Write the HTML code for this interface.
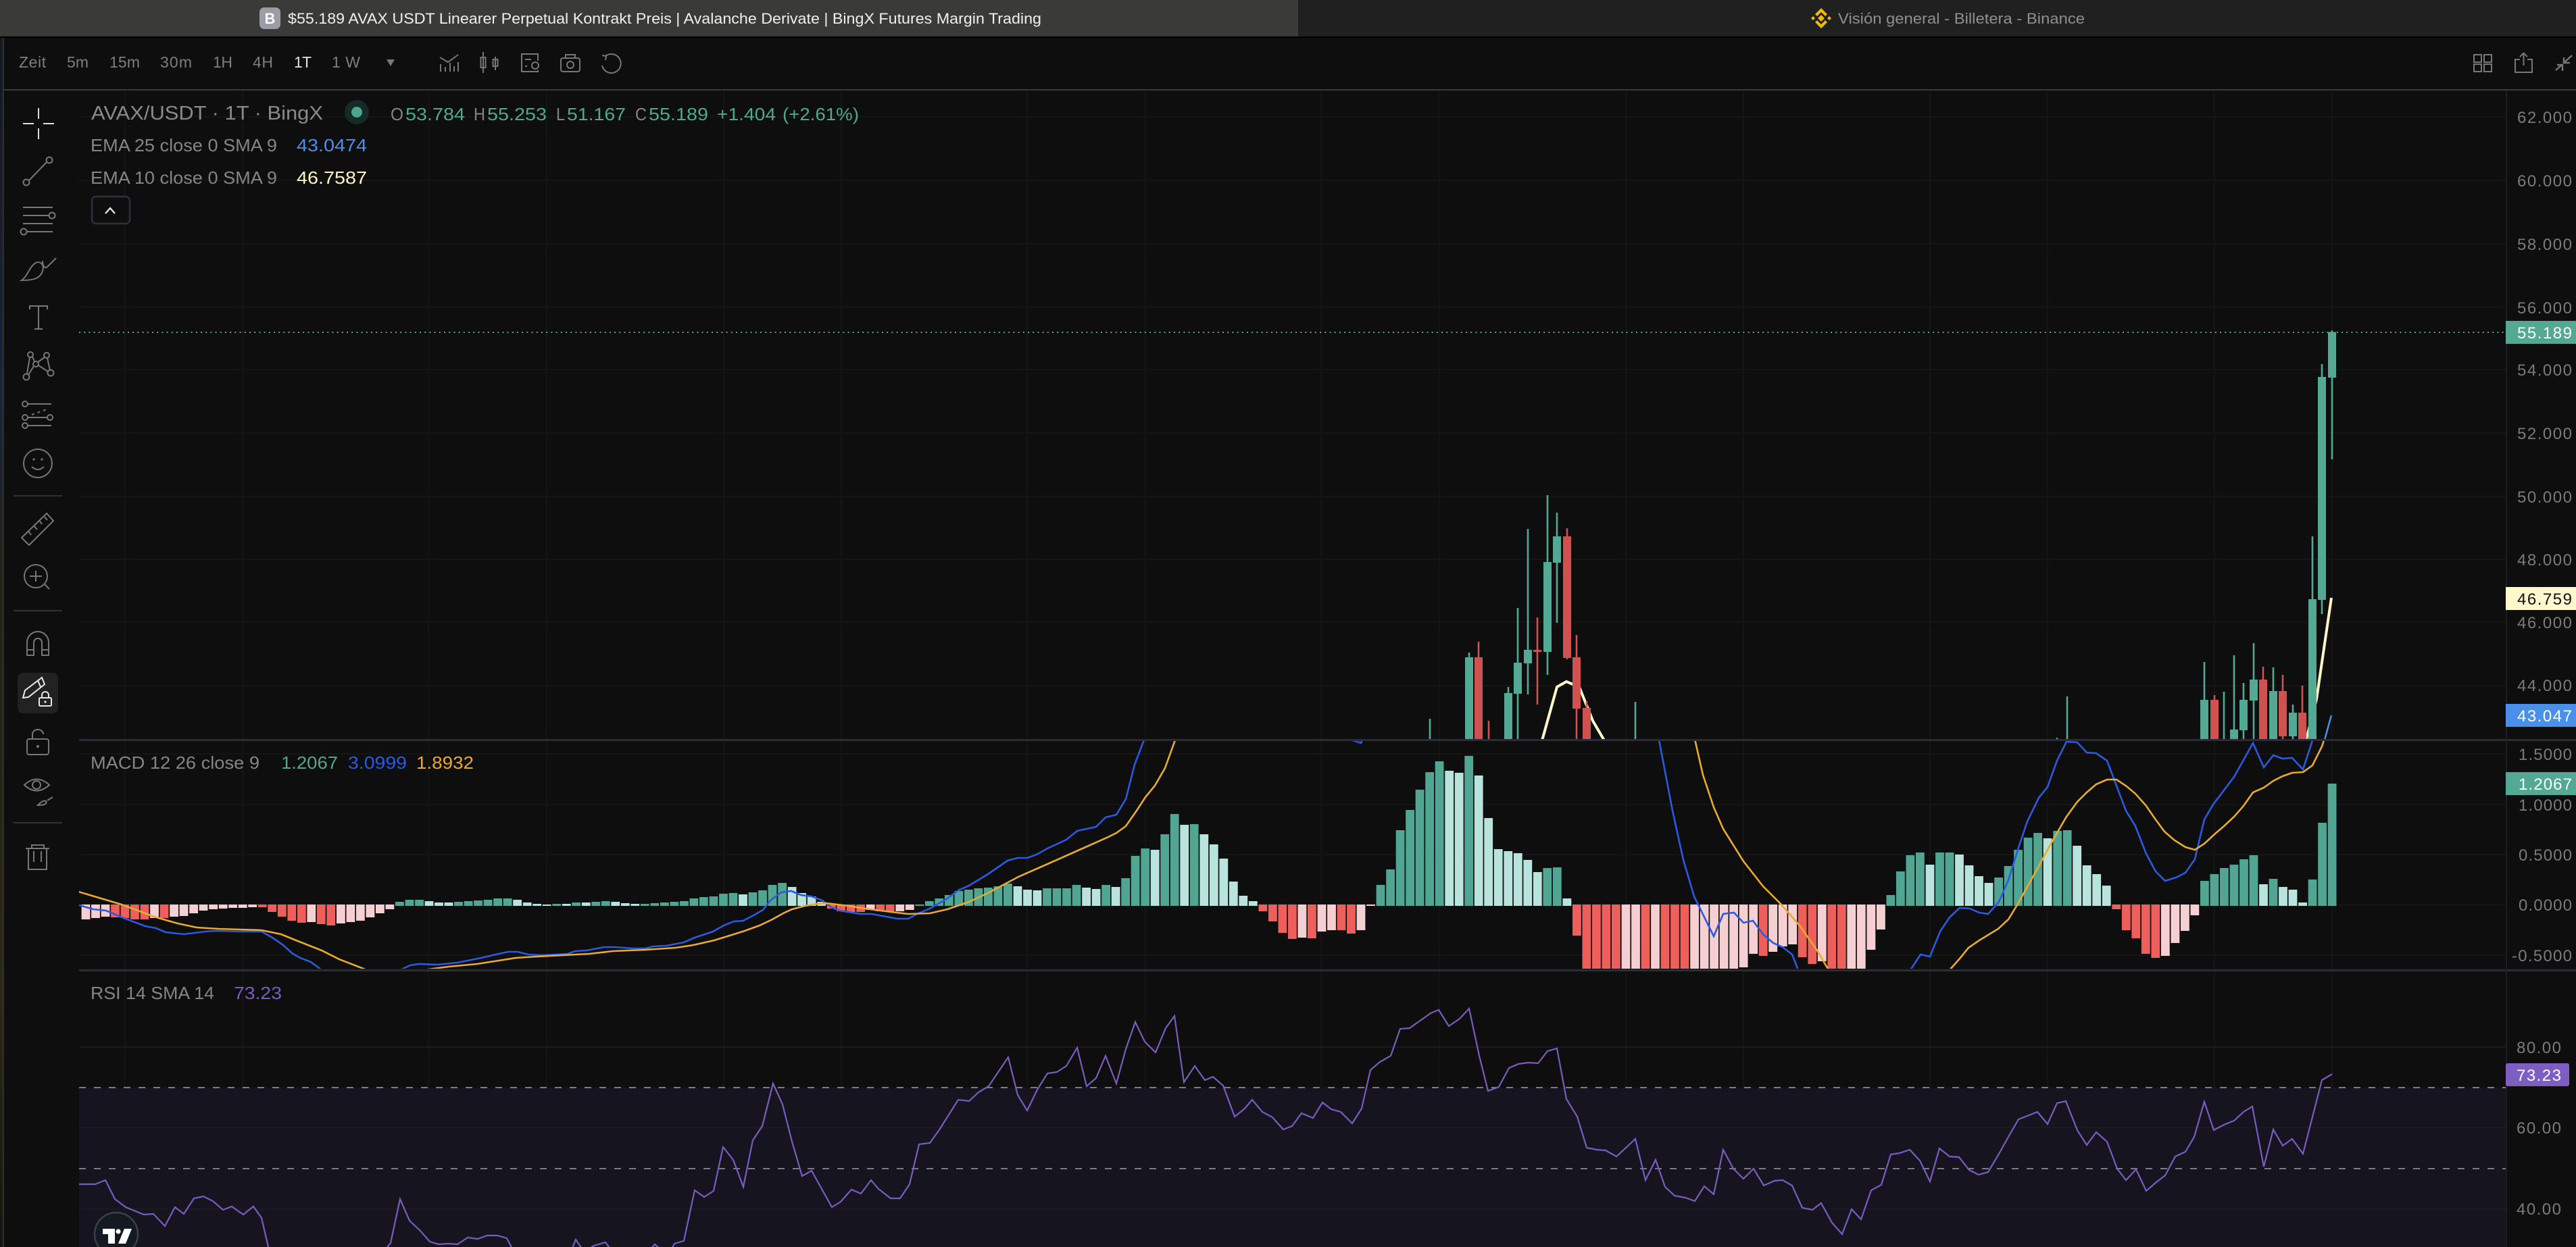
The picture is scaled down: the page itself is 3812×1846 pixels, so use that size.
<!DOCTYPE html>
<html><head><meta charset="utf-8"><title>AVAX/USDT BingX</title>
<style>
html,body{margin:0;padding:0;background:#0e0e0e;overflow:hidden}
svg{display:block}
text{font-family:"Liberation Sans",sans-serif}
.tb{font-size:23px;fill:#7e7e7e}
.ax{font-size:24px;fill:#7b7b7b}
.lg{font-size:26px;fill:#858585}
.ic{fill:none;stroke:#777;stroke-width:2}
.g{fill:#4fa893}
</style></head><body>
<svg width="3812" height="1846" viewBox="0 0 3812 1846" xmlns="http://www.w3.org/2000/svg">
<defs>
<clipPath id="cp"><rect x="117" y="134" width="3591" height="960"/></clipPath>
<clipPath id="cm"><rect x="117" y="1097" width="3591" height="337"/></clipPath>
<clipPath id="cr"><rect x="117" y="1438" width="3591" height="408"/></clipPath>
<linearGradient id="wall" x1="0" y1="0" x2="0" y2="1"><stop offset="0" stop-color="#14181f"/><stop offset=".3" stop-color="#18233a"/><stop offset=".45" stop-color="#222216"/><stop offset=".8" stop-color="#2a2812"/><stop offset="1" stop-color="#16140c"/></linearGradient>
</defs>
<rect width="3812" height="1846" fill="#0e0e0e"/>
<!-- tabs -->
<rect x="0" y="0" width="1921" height="54" fill="#3a3a38"/>
<rect x="1921" y="0" width="1891" height="54" fill="#202020"/>
<rect x="0" y="54" width="3812" height="2" fill="#000"/>
<rect x="384" y="11" width="31" height="32" rx="7" fill="#9c9ca8"/>
<text x="399.5" y="35" text-anchor="middle" font-size="22" font-weight="bold" fill="#fff">B</text>
<text x="426" y="35" font-size="22" fill="#efefef" textLength="1115" lengthAdjust="spacingAndGlyphs">$55.189 AVAX USDT Linearer Perpetual Kontrakt Preis | Avalanche Derivate | BingX Futures Margin Trading</text>
<g fill="#f0b90b"><path d="M2695 22l5 5-5 5-5-5Z"/><path d="M2695 12l9 9-3 3-6-6-6 6-3-3Z"/><path d="M2695 42l9-9-3-3-6 6-6-6-3 3Z"/><path d="M2680 27l3-3 3 3-3 3Z"/><path d="M2710 27l-3-3-3 3 3 3Z"/></g>
<text x="2720" y="35" font-size="22" fill="#8f8f8f" textLength="365" lengthAdjust="spacingAndGlyphs">Visión general - Billetera - Binance</text>
<!-- toolbar -->
<text class="tb" x="28" y="100" textLength="40">Zeit</text>
<text class="tb" x="99" y="100" textLength="32">5m</text>
<text class="tb" x="162" y="100" textLength="45">15m</text>
<text class="tb" x="237" y="100" textLength="47">30m</text>
<text class="tb" x="315" y="100" textLength="29">1H</text>
<text class="tb" x="374" y="100" textLength="30">4H</text>
<text class="tb" x="435" y="100" textLength="26" style="fill:#e0e0e0">1T</text>
<text class="tb" x="491" y="100" textLength="42">1 W</text>
<path d="M572 88H584L578 98Z" fill="#777"/>
<g class="ic">
<path d="M651 85L663 92L678 81M652 106V95M659 106V99M666 106V93M672 106V98M678 106V92"/>
<path d="M715 77V108M711.5 85H718.5V100H711.5ZM733 84V104M729.5 88H736.5V98H729.5Z"/>
<path d="M796 90V80H772V106H796V104M777 88H786M777 98H780"/><circle cx="792" cy="97" r="5"/>
<rect x="830" y="86" width="28" height="20" rx="3"/><path d="M837 86V81H851V86"/><circle cx="844" cy="96" r="5"/>
<path d="M896 83A14 14 0 1 1 891 97M891 82L897 83L896 89"/>
<rect x="3661" y="81" width="11" height="11"/><rect x="3676" y="81" width="11" height="11"/><rect x="3661" y="95" width="11" height="11"/><rect x="3676" y="95" width="11" height="11"/>
<path d="M3729 88H3722V107H3747V88H3740M3734.5 97V79M3729 84L3734.5 78.5L3740 84"/>
<path d="M3806 82L3794 93M3794 85V93H3803M3782 104L3791 96M3784 96H3792V105" style="stroke-width:2.5"/>
</g>
<rect x="5" y="132" width="3807" height="2" fill="#3a3a3a"/>
<!-- grid -->
<path d="M185 134V1846M359 134V1846M634 134V1846M809 134V1846M1071 134V1846M1245 134V1846M1520 134V1846M1695 134V1846M1955 134V1846M2130 134V1846M2406 134V1846M2580 134V1846M2856 134V1846M3030 134V1846M3277 134V1846M3451 134V1846" stroke="#151515" stroke-width="2" fill="none"/>
<path d="M117 173H3708M117 267H3708M117 361H3708M117 454H3708M117 547H3708M117 641H3708M117 735H3708M117 828H3708M117 921H3708M117 1015H3708M117 1116H3708M117 1191H3708M117 1265H3708M117 1339H3708M117 1414H3708" stroke="#151515" stroke-width="2" fill="none"/>
<!-- rsi band -->
<rect x="117" y="1610" width="3591" height="236" fill="#16151f"/>
<path d="M117 1550H3708M117 1669H3708M117 1790H3708" stroke="#1b1a22" stroke-width="2" fill="none"/>
<path d="M117 1610H3708M117 1730H3708" stroke="#7b7b85" stroke-width="2" stroke-dasharray="10 12" fill="none"/>
<!-- price pane -->
<g clip-path="url(#cp)">
<path d="M2282 1096L2304 1017L2318 1009L2337 1017L2357 1067L2374 1096M3412 1098L3428 1035L3450 885" fill="none" stroke="#fff8c8" stroke-width="4"/>
<path d="M3440 1095L3450 1059" fill="none" stroke="#4a90e8" stroke-width="2.5"/>
<path d="M2116 1064V1095M2174 966V1095M2232 1017V1095M2246 900V1095M2261 783V1028M2290 733V999M2304 759V922M2420 1039V1095M3044 1092V1095M3059 1031V1095M3262 980V1095M3291 1024V1095M3306 970V1095M3320 1011V1095M3335 952V1095M3364 988V1095M3393 1043V1095M3422 794V1095M3436 539V909M3451 489V680" stroke="#53a994" stroke-width="2.6" fill="none"/>
<path d="M2188 950V1095M2203 1067V1095M2275 914V1043M2319 782V976M2333 940V1095M2348 1038V1095M3277 1029V1095M3349 987V1095M3378 999V1095M3407 1015V1095" stroke="#cf5150" stroke-width="2.6" fill="none"/>
<path d="M2174 973V1095M2232 1026V1095M2246 981V1027M2261 962V982M2290 832V965M2304 794V833M3262 1036V1095M3306 1080V1095M3320 1036V1081M3335 1006V1037M3364 1023V1095M3393 1055V1090M3422 887V1095M3436 558V888M3451 491.5V559" stroke="#53a994" stroke-width="12" fill="none"/>
<path d="M2188 973V1095M2275 962V965M2319 794V974M2333 973V1049M2348 1048V1095M3277 1036V1095M3349 1006V1095M3378 1023V1090M3407 1055V1095" stroke="#cf5150" stroke-width="12" fill="none"/>
</g>
<!-- dotted last price -->
<path d="M117 492H3708" stroke="#53a994" stroke-width="2" stroke-dasharray="2 5.2" fill="none"/>
<!-- macd -->
<g clip-path="url(#cm)">
<path fill="none" stroke="#50a692" stroke-width="12.8" d="M591.4 1335V1341M606 1332V1341M620.5 1332V1341M678.5 1335V1341M693.1 1334V1341M707.6 1333V1341M722.1 1332V1341M736.6 1330V1341M751.1 1330V1341M823.7 1338V1341M852.7 1336V1341M881.8 1335V1341M896.3 1334V1341M954.3 1338V1341M968.9 1337V1341M983.4 1336V1341M997.9 1335V1341M1012.4 1334V1341M1026.9 1330V1341M1041.4 1328V1341M1056 1327V1341M1070.5 1323V1341M1085 1322V1341M1114 1321V1341M1128.5 1318V1341M1143 1310V1341M1157.6 1307V1341M1360.8 1339V1341M1375.3 1334V1341M1389.8 1330V1341M1404.3 1325V1341M1418.9 1319V1341M1433.4 1317V1341M1447.9 1315V1341M1462.4 1314V1341M1476.9 1312V1341M1491.4 1308V1341M1549.5 1315V1341M1564 1315V1341M1578.5 1315V1341M1593 1310V1341M1636.6 1310V1341M1665.6 1300V1341M1680.1 1267V1341M1694.7 1256V1341M1723.7 1235V1341M1738.2 1205V1341M1767.2 1220V1341M2043 1310V1341M2057.6 1287V1341M2072.1 1229V1341M2086.6 1199V1341M2101.1 1169V1341M2115.6 1143V1341M2130.1 1127V1341M2173.7 1119V1341M2289.8 1285V1341M2304.3 1284V1341M2797.9 1325V1341M2812.4 1290V1341M2826.9 1266V1341M2841.4 1262V1341M2870.5 1262V1341M2885 1262V1341M2957.6 1299V1341M2972.1 1282V1341M2986.6 1258V1341M3001.1 1240V1341M3015.6 1233V1341M3044.7 1230V1341M3059.2 1229V1341M3262.4 1304V1341M3276.9 1294V1341M3291.4 1285V1341M3306 1280V1341M3320.5 1272V1341M3335 1266V1341M3364 1301V1341M3422.1 1302V1341M3436.6 1218V1341M3451.1 1160V1341"/>
<path fill="none" stroke="#b9e3dd" stroke-width="12.8" d="M635 1334V1341M649.5 1336V1341M664 1336V1341M765.6 1332V1341M780.2 1336V1341M794.7 1338V1341M809.2 1339V1341M838.2 1338V1341M867.3 1336V1341M910.8 1335V1341M925.3 1337V1341M939.8 1338V1341M1099.5 1324V1341M1172.1 1313V1341M1186.6 1322V1341M1201.1 1327V1341M1215.6 1335V1341M1506 1312V1341M1520.5 1317V1341M1535 1318V1341M1607.6 1314V1341M1622.1 1316V1341M1651.1 1313V1341M1709.2 1258V1341M1752.7 1221V1341M1781.8 1235V1341M1796.3 1250V1341M1810.8 1271V1341M1825.3 1305V1341M1839.8 1326V1341M1854.3 1334V1341M2144.7 1141V1341M2159.2 1144V1341M2188.2 1148V1341M2202.7 1211V1341M2217.2 1257V1341M2231.8 1260V1341M2246.3 1263V1341M2260.8 1273V1341M2275.3 1291V1341M2318.9 1330V1341M2856 1280V1341M2899.5 1265V1341M2914 1281V1341M2928.5 1297V1341M2943 1307V1341M3030.1 1241V1341M3073.7 1252V1341M3088.2 1281V1341M3102.7 1294V1341M3117.2 1311V1341M3349.5 1309V1341M3378.5 1313V1341M3393 1317V1341M3407.6 1336V1341"/>
<path fill="none" stroke="#ee5f5b" stroke-width="12.8" d="M170.5 1339V1358M185 1339V1359M199.5 1339V1361M214 1339V1361M243 1339V1359M388.2 1339V1343M402.7 1339V1350M417.3 1339V1357M431.8 1339V1363M446.3 1339V1366M475.3 1339V1368M489.8 1339V1370M1230.2 1339V1345M1244.7 1339V1349M1259.2 1339V1350M1273.7 1339V1350M1302.7 1339V1349M1317.2 1339V1349M1868.9 1339V1349M1883.4 1339V1364M1897.9 1339V1381M1912.4 1339V1390M1941.4 1339V1389M1985 1339V1377M1999.5 1339V1382M2333.4 1339V1385M2347.9 1339V1434M2362.4 1339V1434M2376.9 1339V1434M2391.4 1339V1434M2435 1339V1434M2464 1339V1434M2478.5 1339V1434M2493 1339V1434M2609.2 1339V1415M2667.2 1339V1417M2681.8 1339V1427M2710.8 1339V1434M2725.3 1339V1434M3131.8 1339V1346M3146.3 1339V1377M3160.8 1339V1389M3175.3 1339V1412M3189.8 1339V1418"/>
<path fill="none" stroke="#f5cfd2" stroke-width="12.8" d="M127 1339V1361M141.5 1339V1359M156 1339V1357M228.5 1339V1359M257.6 1339V1357M272 1339V1356M286.6 1339V1352M301 1339V1348M315.7 1339V1346M330.2 1339V1345M344.7 1339V1344M359.2 1339V1344M373.7 1339V1343M460.8 1339V1365M504.4 1339V1367M518.9 1339V1365M533.4 1339V1363M547.9 1339V1358M562.4 1339V1352M576.9 1339V1346M1288.2 1339V1347M1331.8 1339V1349M1346.3 1339V1347M1926.9 1339V1388M1956 1339V1379M1970.5 1339V1377M2014 1339V1377M2028.5 1339V1341M2406 1339V1434M2420.5 1339V1434M2449.5 1339V1434M2507.6 1339V1434M2522.1 1339V1434M2536.6 1339V1434M2551.1 1339V1434M2565.6 1339V1434M2580.1 1339V1432M2594.7 1339V1412M2623.7 1339V1409M2638.2 1339V1401M2652.7 1339V1398M2696.3 1339V1423M2739.8 1339V1434M2754.3 1339V1434M2768.9 1339V1406M2783.4 1339V1376M3204.3 1339V1415M3218.9 1339V1396M3233.4 1339V1378M3247.9 1339V1355"/>
<path fill="none" stroke="#2b5ae0" stroke-width="2.6" d="M117 1340L138 1346L157 1348L183 1359L215 1371L231 1374L245 1380L272 1383L304 1379L320 1378L355 1379L387 1379L403 1388L419 1399L432 1411L444 1418L460 1424L476 1436M592 1436L607 1429L620 1427L648 1428L677 1425L712 1418L738 1412L752 1409L766 1409L782 1413L802 1414L821 1413L840 1412L851 1408L868 1407L894 1402L910 1402L935 1404L955 1404L967 1401L986 1400L1012 1395L1028 1388L1055 1379L1071 1370L1086 1364L1100 1363L1115 1355L1129 1347L1140 1333L1156 1321L1171 1319L1185 1325L1201 1327L1217 1333L1230 1343L1242 1348L1274 1353L1290 1353L1328 1360L1344 1360L1357 1353L1376 1345L1402 1330L1418 1318L1434 1311L1462 1294L1491 1274L1506 1270L1520 1270L1534 1265L1550 1256L1578 1243L1594 1230L1622 1224L1636 1210L1652 1206L1666 1183L1679 1132L1695 1090M1996 1094L2014 1100L2018 1090M2454 1090L2475 1200L2491 1273L2507 1327L2536 1386L2550 1353L2566 1351L2580 1366L2594 1363L2609 1383L2624 1396L2638 1402L2652 1413L2661 1436M2827 1436L2842 1413L2856 1416L2871 1379L2885 1358L2900 1344L2915 1345L2929 1351L2942 1353L2958 1335L2972 1303L2986 1258L3000 1216L3017 1181L3030 1165L3044 1126L3058 1098L3074 1099L3088 1114L3102 1115L3118 1126L3146 1200L3160 1223L3176 1264L3190 1290L3204 1304L3220 1299L3234 1292L3248 1272L3262 1213L3275 1191L3306 1150L3334 1100L3350 1136L3364 1118L3378 1123L3392 1122L3408 1139L3424 1090"/>
<path fill="none" stroke="#e8ab30" stroke-width="2.6" d="M116 1320L180 1339L228 1357L263 1367L291 1373L323 1375L355 1376L387 1377L416 1383L438 1392L476 1407L502 1420L543 1436M626 1436L664 1431L706 1427L738 1422L763 1418L795 1416L833 1414L872 1412L907 1408L955 1406L1000 1403L1026 1399L1057 1392L1083 1384L1102 1378L1124 1370L1143 1361L1159 1352L1172 1346L1191 1341L1210 1338L1223 1337L1255 1341L1287 1346L1319 1350L1344 1353L1376 1352L1402 1346L1434 1335L1462 1322L1507 1298L1548 1280L1593 1260L1638 1240L1652 1233L1666 1223L1682 1200L1695 1180L1709 1163L1724 1137L1741 1090M2507 1090L2520 1147L2536 1195L2550 1227L2580 1275L2609 1312L2635 1338L2663 1370L2689 1407L2706 1436M2885 1436L2900 1419L2913 1403L2929 1392L2957 1375L2972 1361L2986 1338L3015 1286L3030 1258L3044 1233L3058 1209L3074 1187L3088 1173L3102 1161L3118 1154L3132 1154L3147 1164L3160 1175L3176 1193L3189 1212L3203 1231L3218 1244L3234 1254L3248 1258L3262 1249L3277 1235L3291 1223L3306 1209L3320 1193L3334 1173L3350 1166L3364 1156L3378 1149L3392 1144L3408 1143L3422 1133L3436 1105L3441 1090"/>
</g>
<!-- rsi line -->
<g clip-path="url(#cr)">
<path fill="none" stroke="#7a5cc0" stroke-width="2.2" d="M116 1753L141 1753L156 1747L170 1775L186 1787L213 1798L227 1797L244 1815L259 1787L272 1797L287 1774L301 1771L315 1778L330 1791L343 1786L360 1798L375 1786L387 1803L398 1850M570 1850L578 1840L592 1775L606 1807L622 1822L636 1838L649 1842L663 1841L677 1842L692 1832L707 1834L721 1829L736 1829L750 1833L759 1850M846 1850L852 1835L862 1850M872 1848L879 1844L896 1839L904 1850M962 1850L969 1842L978 1850M993 1850L998 1841L1012 1837L1028 1762L1042 1772L1056 1763L1070 1698L1085 1717L1100 1757L1114 1688L1128 1667L1144 1604L1158 1635L1172 1690L1187 1741L1201 1733L1231 1787L1244 1779L1260 1761L1274 1767L1289 1747L1300 1760L1318 1774L1332 1774L1346 1753L1360 1694L1376 1692L1391 1671L1418 1628L1434 1630L1448 1617L1463 1608L1492 1565L1506 1621L1520 1644L1535 1613L1550 1589L1564 1587L1578 1578L1594 1551L1608 1608L1622 1596L1636 1563L1652 1604L1666 1553L1680 1513L1694 1542L1710 1558L1725 1522L1738 1504L1752 1602L1768 1578L1783 1599L1795 1594L1810 1607L1827 1653L1841 1642L1853 1628L1868 1646L1883 1654L1899 1672L1912 1667L1926 1648L1943 1655L1957 1632L1970 1642L1984 1646L2001 1663L2015 1641L2028 1584L2042 1572L2058 1563L2072 1523L2086 1522L2100 1512L2117 1500L2129 1495L2144 1519L2160 1508L2174 1493L2189 1563L2202 1615L2218 1609L2233 1581L2247 1575L2262 1573L2276 1574L2290 1556L2304 1552L2318 1627L2334 1653L2348 1699L2363 1702L2376 1703L2392 1712L2420 1686L2435 1747L2450 1717L2464 1757L2478 1770L2494 1773L2508 1778L2522 1756L2536 1768L2550 1702L2565 1730L2580 1745L2595 1730L2610 1755L2626 1748L2638 1747L2652 1755L2667 1788L2682 1791L2695 1781L2711 1810L2726 1827L2740 1790L2754 1805L2769 1762L2784 1754L2798 1709L2811 1707L2826 1702L2841 1718L2856 1749L2870 1700L2885 1712L2899 1713L2914 1732L2928 1739L2942 1735L2957 1710L2972 1683L2987 1657L3000 1652L3015 1646L3030 1664L3044 1633L3057 1630L3074 1673L3088 1695L3102 1676L3118 1690L3133 1730L3146 1747L3161 1731L3176 1763L3191 1750L3204 1740L3219 1712L3234 1705L3247 1683L3262 1631L3276 1673L3291 1665L3306 1659L3320 1646L3333 1638L3350 1727L3364 1672L3378 1696L3392 1686L3408 1708L3436 1599L3451 1590"/>
</g>
<!-- pane separators and axis -->
<rect x="117" y="1094" width="3695" height="3" fill="#2c2c38"/>
<rect x="117" y="1435" width="3695" height="3" fill="#2c2c38"/>
<rect x="3708" y="134" width="2" height="1712" fill="#1f1f1f"/>
<rect x="3710" y="134" width="102" height="960" fill="#0e0e0e"/>
<rect x="3710" y="1097" width="102" height="338" fill="#0e0e0e"/>
<rect x="3710" y="1438" width="102" height="408" fill="#0e0e0e"/>
<!-- axis labels -->
<text class="ax" x="3725" y="182" textLength="81">62.000</text>
<text class="ax" x="3725" y="276" textLength="81">60.000</text>
<text class="ax" x="3725" y="370" textLength="81">58.000</text>
<text class="ax" x="3725" y="464" textLength="81">56.000</text>
<text class="ax" x="3725" y="556" textLength="81">54.000</text>
<text class="ax" x="3725" y="650" textLength="81">52.000</text>
<text class="ax" x="3725" y="744" textLength="81">50.000</text>
<text class="ax" x="3725" y="837" textLength="81">48.000</text>
<text class="ax" x="3725" y="930" textLength="81">46.000</text>
<text class="ax" x="3725" y="1023" textLength="81">44.000</text>
<rect x="3708" y="475" width="104" height="34" fill="#53a994"/>
<text class="ax" x="3725" y="501" textLength="81" style="fill:#fff">55.189</text>
<rect x="3708" y="869" width="104" height="34" fill="#fff8cc"/>
<text class="ax" x="3725" y="895" textLength="81" style="fill:#111">46.759</text>
<rect x="3708" y="1042" width="104" height="34" fill="#4a90e8"/>
<text class="ax" x="3725" y="1068" textLength="81" style="fill:#fff">43.047</text>
<text class="ax" x="3727" y="1125" textLength="79">1.5000</text>
<text class="ax" x="3727" y="1200" textLength="79">1.0000</text>
<rect x="3708" y="1143" width="104" height="34" fill="#53a994"/>
<text class="ax" x="3727" y="1169" textLength="79" style="fill:#fff">1.2067</text>
<text class="ax" x="3727" y="1274" textLength="79">0.5000</text>
<text class="ax" x="3727" y="1348" textLength="79">0.0000</text>
<text class="ax" x="3717" y="1423" textLength="89">-0.5000</text>
<text class="ax" x="3724" y="1559" textLength="66">80.00</text>
<text class="ax" x="3724" y="1678" textLength="66">60.00</text>
<text class="ax" x="3724" y="1798" textLength="66">40.00</text>
<rect x="3708" y="1574" width="94" height="34" rx="3" fill="#7d5fc4"/>
<text class="ax" x="3724" y="1600" textLength="66" style="fill:#fff">73.23</text>
<!-- legends -->
<text x="135" y="177" font-size="29" fill="#8a8a8a" textLength="343" lengthAdjust="spacingAndGlyphs">AVAX/USDT · 1T · BingX</text>
<circle cx="528" cy="166" r="18" fill="#142b26"/><circle cx="528" cy="166" r="8" fill="#4ca58e"/>
<text class="lg" x="578" y="178" textLength="19" lengthAdjust="spacingAndGlyphs">O</text>
<text class="lg g" x="600" y="178" textLength="88" lengthAdjust="spacingAndGlyphs">53.784</text>
<text class="lg" x="701" y="178" textLength="17" lengthAdjust="spacingAndGlyphs">H</text>
<text class="lg g" x="721" y="178" textLength="88" lengthAdjust="spacingAndGlyphs">55.253</text>
<text class="lg" x="823" y="178" textLength="13" lengthAdjust="spacingAndGlyphs">L</text>
<text class="lg g" x="839" y="178" textLength="87" lengthAdjust="spacingAndGlyphs">51.167</text>
<text class="lg" x="940" y="178" textLength="17" lengthAdjust="spacingAndGlyphs">C</text>
<text class="lg g" x="960" y="178" textLength="88" lengthAdjust="spacingAndGlyphs">55.189</text>
<text class="lg g" x="1061" y="178" textLength="87" lengthAdjust="spacingAndGlyphs">+1.404</text>
<text class="lg g" x="1158" y="178" textLength="113" lengthAdjust="spacingAndGlyphs">(+2.61%)</text>
<text class="lg" x="134" y="224" textLength="276" lengthAdjust="spacingAndGlyphs">EMA 25 close 0 SMA 9</text>
<text class="lg" x="439" y="224" textLength="104" lengthAdjust="spacingAndGlyphs" style="fill:#4a90e8">43.0474</text>
<text class="lg" x="134" y="272" textLength="276" lengthAdjust="spacingAndGlyphs">EMA 10 close 0 SMA 9</text>
<text class="lg" x="439" y="272" textLength="104" lengthAdjust="spacingAndGlyphs" style="fill:#fff4c4">46.7587</text>
<rect x="136" y="291" width="56" height="40" rx="6" fill="#0e0e0e" stroke="#2c3040" stroke-width="2.5"/>
<path d="M156 316L163 308L170 316" fill="none" stroke="#eee" stroke-width="2.2"/>
<text class="lg" x="134" y="1138" textLength="250" lengthAdjust="spacingAndGlyphs">MACD 12 26 close 9</text>
<text class="lg g" x="416" y="1138" textLength="84" lengthAdjust="spacingAndGlyphs">1.2067</text>
<text class="lg" x="515" y="1138" textLength="87" lengthAdjust="spacingAndGlyphs" style="fill:#2b5ae0">3.0999</text>
<text class="lg" x="616" y="1138" textLength="85" lengthAdjust="spacingAndGlyphs" style="fill:#e8ab30">1.8932</text>
<text class="lg" x="134" y="1479" textLength="183" lengthAdjust="spacingAndGlyphs">RSI 14 SMA 14</text>
<text class="lg" x="346" y="1479" textLength="71" lengthAdjust="spacingAndGlyphs" style="fill:#7a5cc0">73.23</text>
<!-- TV logo -->
<circle cx="172" cy="1827" r="32" fill="#131a22" stroke="#3b3f48" stroke-width="2.5"/>
<path d="M152 1819H170V1841H160V1827H152Z" fill="#fff"/><circle cx="175" cy="1823" r="3.6" fill="#fff"/><path d="M184 1819H195L186 1841H175Z" fill="#fff"/>
<!-- left tools -->
<rect x="0" y="56" width="4" height="1790" fill="url(#wall)"/>
<rect x="4" y="56" width="1.5" height="1790" fill="#3c3c3c"/>
<path d="M34 183H50M64 183H80M57 160V176M57 190V206" stroke="#ddd" stroke-width="2" fill="none"/>
<g class="ic">
<circle cx="39" cy="270" r="4.5"/><circle cx="73" cy="237" r="4.5"/><path d="M43 267L69 240"/>
<path d="M34 307H78M34 319H72M34 331H78M40 343H78"/><circle cx="77" cy="319" r="4.5"/><circle cx="35" cy="343" r="4.5"/>
<path d="M32 415C40 410 44 394 53 389C60 386 66 392 63 401C60 412 50 415 32 415ZM63 386C63 394 66 398 70 395L83 382"/>
<path d="M44 458V453H70V458M57 453V487M51 487H63"/>
<circle cx="45" cy="525" r="4"/><circle cx="69" cy="526" r="4"/><circle cx="39" cy="558" r="4.5"/><circle cx="75" cy="552" r="4.5"/><circle cx="53" cy="539" r="4"/>
<path d="M44 529L40 553M48 528L51 535M56 536L66 529M70 530L74 548M57 541L71 550M42 555L50 542"/>
<circle cx="37" cy="598" r="4"/><path d="M41 598H76"/><circle cx="37" cy="618" r="4"/><circle cx="74" cy="618" r="4"/><path d="M41 618H70"/><circle cx="37" cy="630" r="4"/><path d="M41 630H76"/><path d="M47 614L72 605" stroke-dasharray="4 5"/>
<circle cx="56" cy="686" r="21"/><path d="M47 691Q56 699 65 691"/>
<path d="M32 796L69 760L79 771L43 807ZM42 786L46 792M50 778L55 784M58 770L62 776M66 765L70 770"/>
<circle cx="53" cy="853" r="17"/><path d="M44 853H62M53 845V861M65 864L73 872"/>
<path d="M40 970V951A16 16 0 0 1 72 951V970H62V951A6 6 0 0 0 50 951V970ZM40 962H50M62 962H72"/>
</g>
<circle cx="50" cy="680" r="1.6" fill="#777"/><circle cx="62" cy="680" r="1.6" fill="#777"/>
<path d="M20 734H92M20 904H92M20 1218H92" stroke="#333" stroke-width="2" fill="none"/>
<rect x="26" y="996" width="60" height="60" rx="8" fill="#222"/>
<g fill="none" stroke="#e8e8e8" stroke-width="2"><path d="M34 1033L37 1022L62 1003L66 1013L42 1032ZM56 1007L60 1017"/><rect x="58" y="1033" width="18" height="12" rx="1.5" fill="#222"/><path d="M62 1033V1029A5 5 0 0 1 72 1029V1033"/></g><circle cx="67" cy="1039" r="1.6" fill="#e8e8e8"/>
<g class="ic">
<rect x="40" y="1094" width="32" height="23" rx="3"/><path d="M48 1094V1087A8 7 0 0 1 64 1087"/>
<path d="M36 1162Q54 1145 73 1162Q54 1179 36 1162Z"/><circle cx="54" cy="1162" r="6"/><path d="M56 1192C60 1188 64 1184 68 1186C70 1190 66 1192 56 1192ZM70 1185L78 1180"/>
<path d="M38 1256H73M47 1256V1251H65V1256M42 1256V1287H69V1256M50 1260V1276M61 1260V1276"/>
</g>
<circle cx="56" cy="1105" r="2" fill="#777"/>
</svg>
</body></html>
